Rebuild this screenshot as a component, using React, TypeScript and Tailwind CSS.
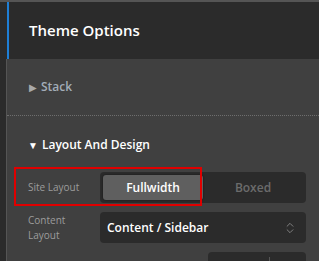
import { ChevronsUpDown } from 'lucide-react';

const font = { fontFamily: '"Open Sans", "Noto Sans", sans-serif' };

export default function App() {
  return (
    <div style={font} className="w-[319px] h-[261px] overflow-hidden bg-[#2b2b2b] flex flex-col">
      <div className="h-[2px] bg-[#555555] shrink-0" />

      {/* header */}
      <div className="flex h-[57px] shrink-0">
        <div className="w-[7px] bg-[#2b2b2b]" />
        <div className="w-[2px] bg-[#1e7fd6]" />
        <div className="flex-1 flex items-center pl-[20px] bg-[#2b2b2b]">
          <h1 className="text-[15px] font-semibold text-white">Theme Options</h1>
        </div>
      </div>

      {/* body */}
      <div className="flex flex-1">
        <div className="w-[6px] bg-[#2b2b2b]" />
        <div className="w-px bg-[#555555]" />
        <div className="flex-1 bg-[#404040] flex flex-col">
          <div className="h-[57px] flex items-center gap-[4px] pl-[22px] border-b border-dotted border-[#6e6e6e]">
            <span className="text-[10px] leading-none text-[#a9a9a9]">▶</span>
            <span className="text-[12px] font-semibold text-[#a3adb8]">Stack</span>
          </div>

          <div className="mt-[20px] h-[18px] flex items-center gap-[4px] pl-[21px]">
            <span className="text-[10px] leading-none text-white">▼</span>
            <span className="text-[12px] font-semibold text-white">Layout And Design</span>
          </div>

          <div className="relative mt-[18px] h-[31px] flex items-center pl-[21px]">
            <span className="w-[72px] text-[10px] text-[#9c9c9c]">Site Layout</span>
            <div className="w-[206px] h-[31px] bg-[#2b2b2b] rounded-[4px] p-[3px] flex">
              <div className="flex-1 rounded-[3px] bg-[#5f5f5f] shadow-[0_0_2px_rgba(0,0,0,0.6)] flex items-center justify-center text-[12px] font-semibold text-white">
                Fullwidth
              </div>
              <div className="flex-1 flex items-center justify-center text-[12px] font-semibold text-[#6b6b6b]">
                Boxed
              </div>
            </div>
            <div className="absolute left-[7px] top-[-5px] w-[188px] h-[39px] border-2 border-[#e00000]" />
          </div>

          <div className="mt-[9px] h-[31px] flex items-center pl-[21px]">
            <span className="w-[72px] text-[10px] leading-[15px] text-[#9c9c9c]">
              Content
              <br />
              Layout
            </span>
            <div className="w-[206px] h-[31px] bg-[#2b2b2b] rounded-[4px] flex items-center justify-between pl-[7px] pr-[9px]">
              <span className="text-[12px] font-semibold text-white">Content / Sidebar</span>
              <ChevronsUpDown size={14} strokeWidth={1.5} className="text-[#8a8a8a]" />
            </div>
          </div>

          <div className="mt-[9px] flex pl-[201px]">
            <div className="w-[98px] h-[20px] bg-[#2b2b2b] rounded-t-[4px] flex">
              <div className="w-[61px]" />
              <div className="w-px mt-[5px] bg-[#555555]" />
            </div>
          </div>
        </div>
      </div>
    </div>
  );
}
